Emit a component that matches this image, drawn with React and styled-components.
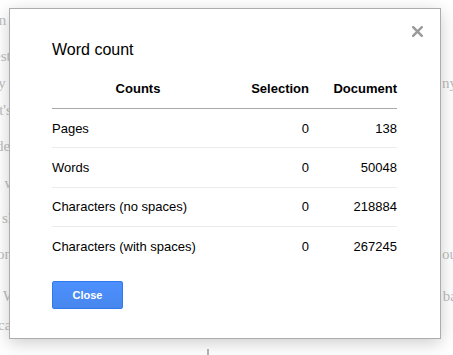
import React from "react";
import styled, { createGlobalStyle } from "styled-components";

const Global = createGlobalStyle`
  html, body { margin: 0; padding: 0; background: #fff; }
  body { width: 453px; height: 355px; overflow: hidden; position: relative; }
`;

const Page = styled.div`
  position: relative;
  width: 453px;
  height: 355px;
  overflow: hidden;
  background: #fff;
`;

const Doc = styled.div`
  display: flex;
  flex-direction: column;
  font-family: "Liberation Serif", "Times New Roman", serif;
  font-size: 15px;
  color: #bdbdbd;
`;

const DocLine = styled.div`
  display: flex;
  justify-content: space-between;
  height: 18px;
  line-height: 18px;
  margin-top: ${(p) => p.$gap}px;
  white-space: nowrap;
`;

const Frag = styled.span`
  margin-left: ${(p) => p.$shift || 0}px;
  margin-right: ${(p) => p.$rshift || 0}px;
`;

const Caret = styled.div`
  position: absolute;
  left: 207px;
  top: 349px;
  width: 2px;
  height: 6px;
  background: #b5b5b5;
`;

const Dialog = styled.div`
  position: absolute;
  left: 9px;
  top: 8px;
  width: 430px;
  height: 329px;
  box-sizing: content-box;
  background: #fff;
  border: 1px solid #acacac;
  box-shadow: 0 4px 16px rgba(0, 0, 0, 0.2);
  padding: 0;
  font-family: "Liberation Sans", Arial, sans-serif;
  color: #222;
`;

const Inner = styled.div`
  display: flex;
  flex-direction: column;
  padding: 31px 42px 0 42px;
`;

const Title = styled.div`
  font-size: 16px;
  line-height: 20px;
  color: #000;
  height: 20px;
`;

const CloseX = styled.button`
  position: absolute;
  top: 12px;
  right: 13px;
  width: 20px;
  height: 20px;
  padding: 0;
  border: 0;
  background: transparent;
  display: flex;
  align-items: center;
  justify-content: center;
  cursor: pointer;
`;

const Table = styled.div`
  display: grid;
  grid-template-columns: 172px 85px 88px;
  width: 346px;
  margin-top: 9px;
  font-size: 13px;
  color: #000;
`;

const HeadCell = styled.div`
  height: 39px;
  display: flex;
  align-items: center;
  justify-content: ${(p) => (p.$align === "right" ? "flex-end" : "center")};
  font-weight: bold;
  border-bottom: 1px solid #aaa;
`;

const Cell = styled.div`
  height: 38.4px;
  display: flex;
  align-items: center;
  justify-content: ${(p) => (p.$align === "right" ? "flex-end" : "flex-start")};
  border-bottom: 1px solid ${(p) => (p.$last ? "transparent" : "#ebebeb")};
`;

const Footer = styled.div`
  display: flex;
  margin-top: 14px;
`;

const PrimaryButton = styled.button`
  width: 71px;
  height: 28px;
  box-sizing: border-box;
  border: 1px solid #3079ed;
  border-radius: 2px;
  background: linear-gradient(#4d90fe, #4787ed);
  color: #fff;
  font-family: "Liberation Sans", Arial, sans-serif;
  font-weight: bold;
  font-size: 11px;
  padding: 0;
  cursor: pointer;
`;

const docLines = [
  { gap: 11, left: "an a", shift: -8 },
  { gap: 18, left: "est", shift: -6 },
  { gap: 9, left: "ly i", shift: -6, right: "ny" },
  { gap: 9, left: "it's", shift: -5 },
  { gap: 18, left: "de", shift: -4 },
  { gap: 19, left: ", w", shift: -3 },
  { gap: 17, left: "sl", shift: 2 },
  { gap: 18, left: "on", shift: -3, right: "ou" },
  { gap: 24, left: "W", shift: 3, right: "ba" },
  { gap: 11, left: "ca", shift: -2 },
];

const rows = [
  ["Pages", 0, 138],
  ["Words", 0, 50048],
  ["Characters (no spaces)", 0, 218884],
  ["Characters (with spaces)", 0, 267245],
];

export default function App() {
  return (
    <Page>
      <Global />
      <Doc>
        {docLines.map((l, i) => (
          <DocLine key={i} $gap={l.gap}>
            <Frag $shift={l.shift}>{l.left}</Frag>
            <Frag $rshift={-4}>{l.right || ""}</Frag>
          </DocLine>
        ))}
      </Doc>
      <Caret />
      <Dialog>
        <CloseX aria-label="Close">
          <svg width="11" height="11" viewBox="0 0 11 11">
            <path d="M1.2 1.2 L9.8 9.8 M9.8 1.2 L1.2 9.8" stroke="#9a9a9a" strokeWidth="2.4" strokeLinecap="square" />
          </svg>
        </CloseX>
        <Inner>
          <Title>Word count</Title>
          <Table>
            <HeadCell>Counts</HeadCell>
            <HeadCell $align="right">Selection</HeadCell>
            <HeadCell $align="right">Document</HeadCell>
            {rows.map((r, i) => {
              const last = i === rows.length - 1;
              return (
                <React.Fragment key={r[0]}>
                  <Cell $last={last}>{r[0]}</Cell>
                  <Cell $align="right" $last={last}>{r[1]}</Cell>
                  <Cell $align="right" $last={last}>{r[2]}</Cell>
                </React.Fragment>
              );
            })}
          </Table>
          <Footer>
            <PrimaryButton>Close</PrimaryButton>
          </Footer>
        </Inner>
      </Dialog>
    </Page>
  );
}
